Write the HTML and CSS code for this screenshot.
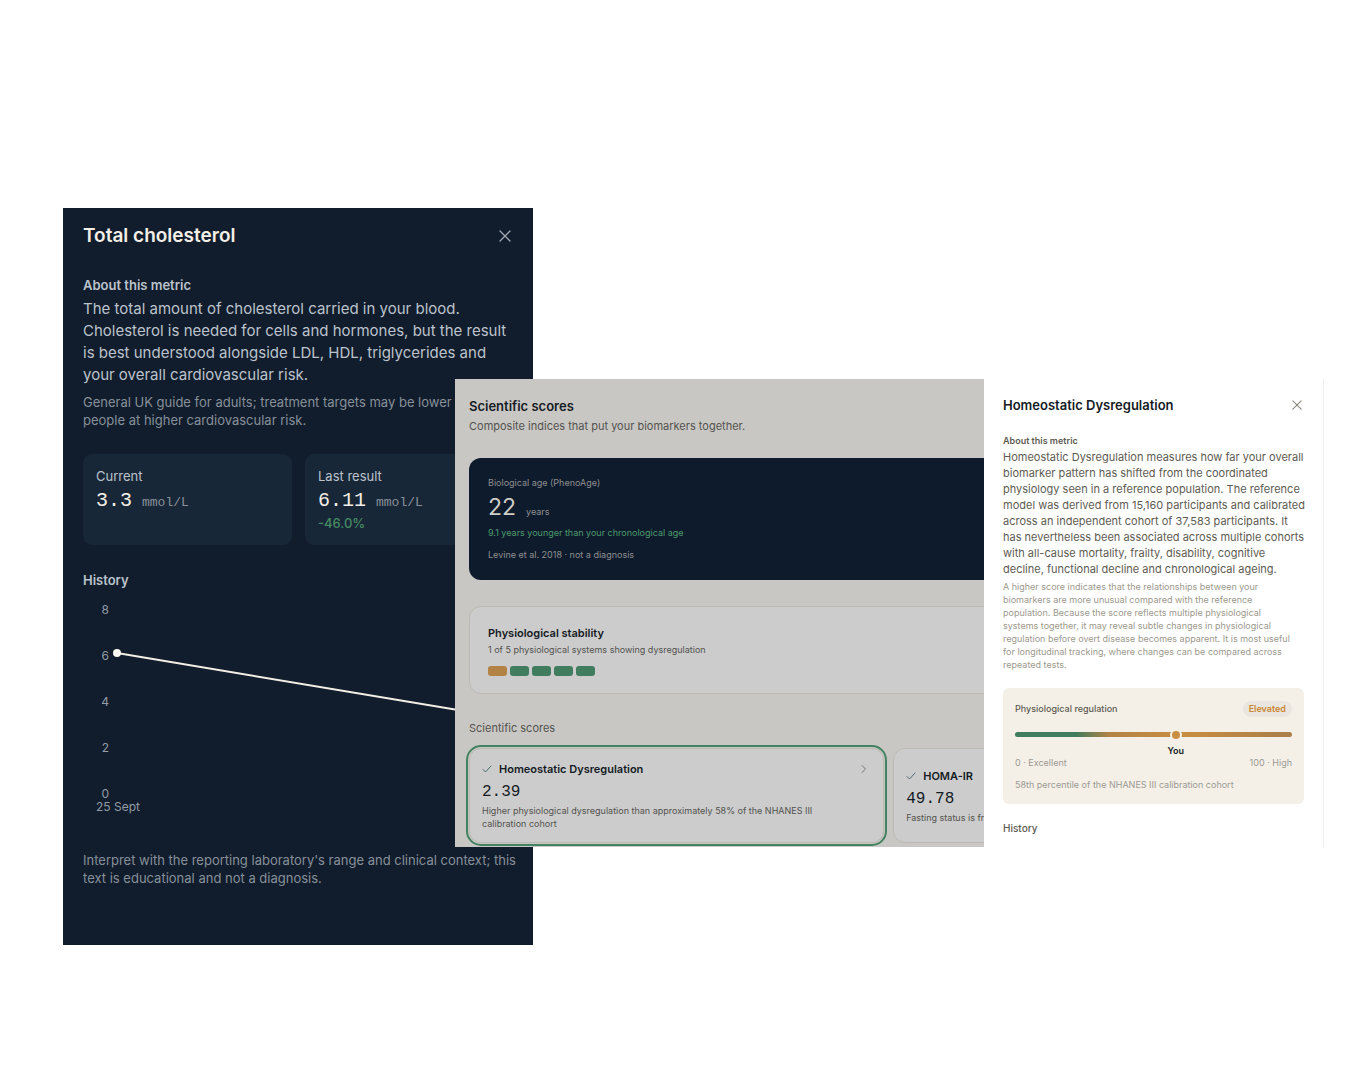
FILE: index.html
```html
<!DOCTYPE html>
<html lang="en">
<head>
    <meta charset="UTF-8">
    <meta name="viewport" content="width=device-width, initial-scale=1.0">
    <title>Scientific scores</title>
    <link rel="stylesheet" href="styles.css">
</head>
<body>
    <main class="stage">
        <section class="panel-dark">
            <header class="panel-header">
                <h2>Total cholesterol</h2>
                <button class="close" type="button" aria-label="Close">
                    <svg width="12" height="12" viewBox="0 0 12 12"><path d="M1 1l10 10M11 1L1 11"/></svg>
                </button>
            </header>
            <h3>About this metric</h3>
            <p class="about">The total amount of cholesterol carried in your blood. Cholesterol is needed for cells and hormones, but the result is best understood alongside LDL, HDL, triglycerides and your overall cardiovascular risk.</p>
            <p class="note">General UK guide for adults; treatment targets may be lower for people at higher cardiovascular risk.</p>

            <div class="results">
                <div class="result">
                    <div class="label">Current</div>
                    <div class="value"><span class="amount">3.3</span><span>mmol/L</span></div>
                </div>
                <div class="result">
                    <div class="label">Last result</div>
                    <div class="value"><span class="amount">6.11</span><span>mmol/L</span></div>
                    <div class="change">-46.0%</div>
                </div>
            </div>

            <h3 class="history-title">History</h3>
            <svg class="chart" viewBox="0 0 431 222" role="img" aria-label="Total cholesterol history">
                <g text-anchor="end">
                    <text x="26" y="16">8</text>
                    <text x="26" y="62">6</text>
                    <text x="26" y="108">4</text>
                    <text x="26" y="154">2</text>
                    <text x="26" y="200">0</text>
                </g>
                <text x="13" y="213">25 Sept</text>
                <path class="line" d="M34 55L423 120"/>
                <circle cx="34" cy="55" r="4"/>
                <circle cx="423" cy="120" r="4"/>
            </svg>
            <p class="note disclaimer">Interpret with the reporting laboratory's range and clinical context; this text is educational and not a diagnosis.</p>
        </section>

        <div class="window">
            <section class="overview">
                <h2>Scientific scores</h2>
                <p class="subtitle">Composite indices that put your biomarkers together.</p>

                <div class="wide">
                    <div class="age-card">
                        <div>Biological age (PhenoAge)</div>
                        <div class="age"><span class="age-number">22</span><span>years</span></div>
                        <div class="younger">9.1 years younger than your chronological age</div>
                        <div>Levine et al. 2018 · not a diagnosis</div>
                    </div>

                    <div class="card stability">
                        <h3>Physiological stability</h3>
                        <p>1 of 5 physiological systems showing dysregulation</p>
                        <div class="segments">
                            <span class="segment warn"></span>
                            <span class="segment"></span>
                            <span class="segment"></span>
                            <span class="segment"></span>
                            <span class="segment"></span>
                        </div>
                    </div>

                    <h3 class="group-title">Scientific scores</h3>
                    <div class="scores">
                        <article class="card score selected">
                            <div class="score-head">
                                <svg class="check" width="10" height="10" viewBox="0 0 10 10"><path d="M1 5.5l2.5 2.5L9 2"/></svg>
                                <h4>Homeostatic Dysregulation</h4>
                                <svg class="chevron" width="6" height="10" viewBox="0 0 6 10"><path d="M1 1.5L4.5 5 1 8.5"/></svg>
                            </div>
                            <div class="number">2.39</div>
                            <p>Higher physiological dysregulation than approximately 58% of the NHANES III calibration cohort</p>
                        </article>
                        <article class="card score">
                            <div class="score-head">
                                <svg class="check" width="10" height="10" viewBox="0 0 10 10"><path d="M1 5.5l2.5 2.5L9 2"/></svg>
                                <h4>HOMA-IR</h4>
                            </div>
                            <div class="number">49.78</div>
                            <p>Fasting status is from your last sample</p>
                        </article>
                    </div>
                </div>
            </section>

            <aside class="drawer">
                <header class="panel-header">
                    <h2>Homeostatic Dysregulation</h2>
                    <button class="close" type="button" aria-label="Close">
                        <svg width="10" height="10" viewBox="0 0 12 12"><path d="M1 1l10 10M11 1L1 11"/></svg>
                    </button>
                </header>
                <h3>About this metric</h3>
                <p class="about">Homeostatic Dysregulation measures how far your overall biomarker pattern has shifted from the coordinated physiology seen in a reference population. The reference model was derived from 15,160 participants and calibrated across an independent cohort of 37,583 participants. It has nevertheless been associated across multiple cohorts with all-cause mortality, frailty, disability, cognitive decline, functional decline and chronological ageing.</p>
                <p class="note">A higher score indicates that the relationships between your biomarkers are more unusual compared with the reference population. Because the score reflects multiple physiological systems together, it may reveal subtle changes in physiological regulation before overt disease becomes apparent. It is most useful for longitudinal tracking, where changes can be compared across repeated tests.</p>

                <div class="regulation">
                    <div class="regulation-head">
                        <span>Physiological regulation</span>
                        <span class="badge">Elevated</span>
                    </div>
                    <div class="track">
                        <div class="marker" style="left: 58%"><span>You</span></div>
                    </div>
                    <div class="scale"><span>0 · Excellent</span><span>100 · High</span></div>
                    <p>58th percentile of the NHANES III calibration cohort</p>
                </div>
                <h3 class="history-title">History</h3>
            </aside>
        </div>
    </main>
</body>
</html>
```
FILE: styles.css
```css
* {
    box-sizing: border-box;
}
body {
    margin: 0;
    background: #fff;
    font-family: Inter, "Liberation Sans", sans-serif;
}
h2, h3, h4, p {
    margin: 0;
}
svg {
    fill: none;
    stroke-linecap: round;
    stroke-linejoin: round;
}
/* the two panels share the middle column */
.stage {
    display: grid;
    grid-template-columns: 392fr 78fr 791fr;
    align-items: start;
    padding: 208px 26px 135px 63px;
}
.panel-header {
    display: flex;
    align-items: center;
    justify-content: space-between;
}
.close {
    display: flex;
    padding: 3px;
    border: 0;
    background: none;
    stroke-width: 1.3;
    cursor: pointer;
}

/* dark metric panel */
.panel-dark {
    grid-area: 1 / 1 / 2 / 3;
    min-width: 0;
    padding: 16px 15px 58px 20px;
    background: #111d2c;
    color: #bcc3cc;
}
.panel-dark h2 {
    font-size: 19px;
    line-height: 24px;
    font-weight: 600;
    color: #f3efe6;
}
.panel-dark h3 {
    margin-top: 28px;
    font-size: 13px;
    line-height: 18px;
    font-weight: 600;
}
.panel-dark .panel-header {
    padding-right: 4px;
}
.panel-dark .close {
    stroke: #a0a8b1;
}
.panel-dark .about {
    margin-top: 4px;
    padding-right: 4px;
    font-size: 15px;
    line-height: 22px;
}
.panel-dark .note {
    margin-top: 7px;
    font-size: 13px;
    line-height: 18px;
    color: #87909a;
}
.results {
    display: grid;
    grid-template-columns: 1fr 1fr;
    gap: 13px;
    margin: 25px 4px 0 0;
}
.result {
    padding: 13px;
    border-radius: 9px;
    background: #182738;
    font-size: 13px;
    line-height: 18px;
}
.value {
    display: flex;
    align-items: baseline;
    gap: 10px;
    margin-top: 2px;
    font-family: "Liberation Mono", monospace;
    color: #87909a;
}
.amount {
    font-size: 20px;
    line-height: 27px;
    color: #f3efe6;
}
.change {
    font-weight: 500;
    color: #468a63;
}
.panel-dark .history-title {
    margin-top: 26px;
}
.chart {
    display: block;
    width: 100%;
    margin-top: 9px;
    padding-right: 4px;
}
.chart text {
    font-size: 12px;
    fill: #929ba5;
}
.chart .line {
    stroke: #f3efe6;
    stroke-width: 2;
}
.chart circle {
    fill: #fbf8f2;
}
.panel-dark .disclaimer {
    margin-top: 31px;
}

/* light window in front of the dark panel */
.window {
    display: grid;
    grid-area: 1 / 2 / 2 / 4;
    grid-template-columns: 529fr 340fr;
    margin-top: 171px;
    z-index: 1;
}
.overview {
    min-width: 0;
    overflow: hidden;
    padding: 17px 0 4px 14px;
    background: #c9c7c3;
    color: #53534f;
}
.overview h2 {
    font-size: 13px;
    line-height: 20px;
    font-weight: 600;
    color: #151b24;
}
.subtitle {
    margin-top: 1px;
    font-size: 11px;
    line-height: 18px;
}
.wide {
    width: 163%;
    margin-top: 23px;
}
.age-card {
    padding: 17px 19px;
    border-radius: 12px;
    background: #0d1b2d;
    color: #908f8d;
    font-size: 9px;
    line-height: 16px;
}
.age {
    display: flex;
    align-items: baseline;
    gap: 10px;
    margin-top: 2px;
    line-height: 12px;
}
.age-number {
    font-size: 23px;
    line-height: 28px;
    color: #d0cdc7;
}
.younger {
    margin: 4px 0 6px;
    color: #4d9a6c;
}
.card {
    border: 1px solid #bbb9b1;
    border-radius: 12px;
    background: #ccc;
}
.stability {
    margin-top: 26px;
    padding: 17px 18px;
    font-size: 9px;
    line-height: 16px;
}
.stability h3 {
    font-size: 11px;
    line-height: 18px;
    font-weight: 600;
    color: #151b24;
}
.segments {
    display: flex;
    gap: 3px;
    margin-top: 8px;
}
.segment {
    width: 19px;
    height: 10px;
    border-radius: 3px;
    background: #407c5e;
}
.segment.warn {
    background: #b28345;
}
.group-title {
    margin-top: 25px;
    font-size: 11px;
    line-height: 18px;
    font-weight: 400;
}
.scores {
    display: grid;
    grid-template-columns: 1fr 1fr;
    gap: 9px;
    margin-top: 11px;
}
.score {
    display: flex;
    flex-direction: column;
    justify-content: center;
    padding: 12px;
    font-size: 9px;
    line-height: 13px;
}
.score p {
    padding-right: 24px;
}
.selected {
    outline: 2px solid #438263;
    outline-offset: 1px;
}
.score-head {
    display: flex;
    align-items: center;
    gap: 7px;
}
.score h4 {
    flex: 1;
    font-size: 11px;
    line-height: 16px;
    font-weight: 600;
    color: #151b24;
}
.check {
    stroke: #4d6e70;
}
.chevron {
    margin-right: 4px;
    stroke: #777774;
}
.number {
    margin: 5px 0 2px;
    font-family: "Liberation Mono", monospace;
    font-size: 16px;
    line-height: 20px;
    color: #151b24;
}

/* drawer on the right of the window */
.drawer {
    min-width: 0;
    padding: 16px 16px 9px 19px;
    border-right: 1px solid #eee;
    background: #fff;
    color: #5e5b52;
}
.drawer .panel-header {
    padding-right: 2px;
}
.drawer h2 {
    font-size: 13px;
    line-height: 20px;
    font-weight: 600;
    color: #151b24;
}
.drawer .close {
    stroke: #8a887f;
}
.drawer h3 {
    margin-top: 18px;
    font-size: 9px;
    line-height: 16px;
    font-weight: 600;
}
.drawer .about {
    font-size: 11px;
    line-height: 16px;
}
.drawer .note {
    margin-top: 3px;
    padding-right: 15px;
    font-size: 9px;
    line-height: 13px;
    color: #9c998d;
}
.regulation {
    margin: 17px 3px 0 0;
    padding: 13px 12px 11px;
    border-radius: 6px;
    background: #f4f0e8;
    font-size: 9px;
    line-height: 16px;
    color: #9c9a93;
}
.regulation-head {
    display: flex;
    justify-content: space-between;
    font-weight: 500;
    color: #5e5b52;
}
.badge {
    padding: 0 6px;
    border-radius: 8px;
    background: #e9e6df;
    color: #cc8532;
    font-weight: 600;
}
.track {
    position: relative;
    height: 5px;
    margin-top: 15px;
    border-radius: 3px;
    background: linear-gradient(90deg, #407c5e 22%, #b28345 34%, #c98e40 60%, #ad8049 95%);
}
.marker {
    position: absolute;
    top: 50%;
    width: 12px;
    height: 12px;
    border: 2px solid #f4f0e8;
    border-radius: 50%;
    background: #c98e40;
    transform: translate(-50%, -50%);
}
.marker span {
    position: absolute;
    top: 14px;
    left: 50%;
    line-height: 12px;
    font-weight: 600;
    color: #151b24;
    transform: translateX(-50%);
}
.scale {
    display: flex;
    justify-content: space-between;
    margin-top: 18px;
}
.regulation p {
    margin-top: 6px;
}
.drawer .history-title {
    margin-top: 16px;
    font-size: 10px;
    font-weight: 500;
}
```
